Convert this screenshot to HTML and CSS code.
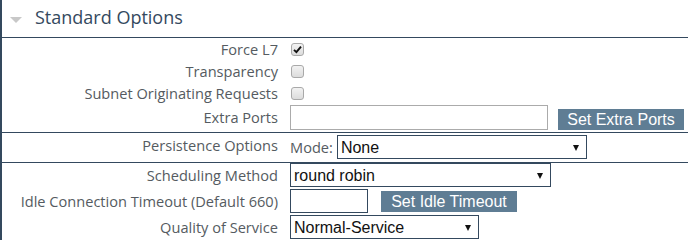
FILE: index.html
```html
<!doctype html>
<html lang="en-us">
	<head>
		<meta charset="utf-8">
		<title>Standard Options</title>
		<link rel="stylesheet" href="styles.css">
	</head>
	<body>
		<div class="panel">
			<div class="panel-head">
				<span class="caret"></span>
				<span class="panel-title">Standard Options</span>
			</div>

			<div class="group">
				<div class="row">
					<label class="label">Force L7</label>
					<div class="control"><span class="check checked"><svg width="9" height="9" viewBox="0 0 9 9"><path d="M1 4.8 L3.4 7.2 L8 1.6" fill="none" stroke="#111" stroke-width="1.9"/></svg></span></div>
				</div>
				<div class="row">
					<label class="label">Transparency</label>
					<div class="control"><span class="check"></span></div>
				</div>
				<div class="row">
					<label class="label">Subnet Originating Requests</label>
					<div class="control"><span class="check"></span></div>
				</div>
				<div class="row row-field">
					<label class="label">Extra Ports</label>
					<div class="control">
						<input class="text text-wide" type="text">
						<button class="btn btn-ports">Set Extra Ports</button>
					</div>
				</div>
			</div>

			<div class="group group-persist">
				<div class="row">
					<label class="label">Persistence Options</label>
					<div class="control">
						<span class="mode">Mode:</span>
						<span class="select select-mode"><select><option>None</option></select></span>
					</div>
				</div>
			</div>

			<div class="group group-last">
				<div class="row">
					<label class="label">Scheduling Method</label>
					<div class="control">
						<span class="select select-sched"><select><option>round robin</option></select></span>
					</div>
				</div>
				<div class="row">
					<label class="label">Idle Connection Timeout (Default 660)</label>
					<div class="control">
						<input class="text text-short" type="text">
						<button class="btn btn-idle">Set Idle Timeout</button>
					</div>
				</div>
				<div class="row">
					<label class="label">Quality of Service</label>
					<div class="control">
						<span class="select select-qos"><select><option>Normal-Service</option></select></span>
					</div>
				</div>
			</div>
		</div>
	</body>
</html>
```

FILE: styles.css
```css
body {
	font-family: "Open Sans", sans-serif;
	margin: 0;
	background: #fff;
}

.panel {
	border-left: 2px solid #34495e;
	height: 240px;
}

.panel-head {
	height: 37px;
	border-bottom: 1px solid #34495e;
	display: flex;
	align-items: center;
}
.caret {
	width: 0;
	height: 0;
	border-left: 6px solid transparent;
	border-right: 6px solid transparent;
	border-top: 6px solid #c8c8c8;
	margin: 2px 13px 0 8px;
}
.panel-title {
	font-size: 18px;
	color: #34495e;
	margin-top: -3px;
}

.group { border-bottom: 1px solid #34495e; }
.group-last { border-bottom: 0; }

.row {
	display: grid;
	grid-template-columns: 276px 1fr;
	column-gap: 12px;
	align-items: center;
	height: 22px;
}
.row-field { height: 28px; padding: 1px 0 0; box-sizing: border-box; align-items: start; }
.row-field .label { line-height: 25px; }
.group-persist { padding: 2px 0 3px; }
.group-persist .row { height: 24px; }
.group-persist .label { margin-top: -4px; }
.group-last { display: flex; flex-direction: column; gap: 2px; }
.group-last .row { height: 24px; }

.label {
	text-align: right;
	font-size: 14.6px;
	color: #555b61;
	white-space: nowrap;
}
.control { display: flex; align-items: center; }

.check {
	width: 11px;
	height: 11px;
	border: 1px solid #a9a9a9;
	border-radius: 3px;
	background: linear-gradient(#f2f2f2, #dcdcdc);
	display: flex;
	align-items: center;
	justify-content: center;
	margin-left: 1px;
}

.text {
	box-sizing: border-box;
	height: 24px;
	margin: 0;
	font: 16px "Liberation Sans", Arial, sans-serif;
	padding: 0 4px;
	outline: none;
}
.text-wide { width: 258px; height: 25px; border: 1px solid #ababab; }
.text-short { width: 78px; border: 1px solid #34495e; }

.btn {
	font: 16px "Liberation Sans", Arial, sans-serif;
	color: #fff;
	background: #5f7d94;
	border: 0;
	padding: 0 5px;
	height: 21px;
	line-height: 21px;
}
.btn-ports { margin: 3px 0 0 10px; width: 126px; }
.btn-idle { margin-left: 13px; width: 136px; }

.mode {
	font-size: 14.6px;
	color: #555b61;
	margin-right: 4px;
}

.select {
	position: relative;
	display: block;
}
.select select {
	appearance: none;
	-webkit-appearance: none;
	box-sizing: border-box;
	width: 100%;
	height: 24px;
	border: 1px solid #34495e;
	border-radius: 0;
	background: #fff;
	font: 16px "Liberation Sans", Arial, sans-serif;
	color: #111;
	padding: 0 3px;
	margin: 0;
	outline: none;
}
.select::after {
	content: "";
	position: absolute;
	right: 8px;
	top: 10px;
	border-left: 3px solid transparent;
	border-right: 3px solid transparent;
	border-top: 6px solid #111;
	pointer-events: none;
}
.select-mode { width: 250px; }
.select-sched { width: 261px; }
.select-qos { width: 189px; }
```
